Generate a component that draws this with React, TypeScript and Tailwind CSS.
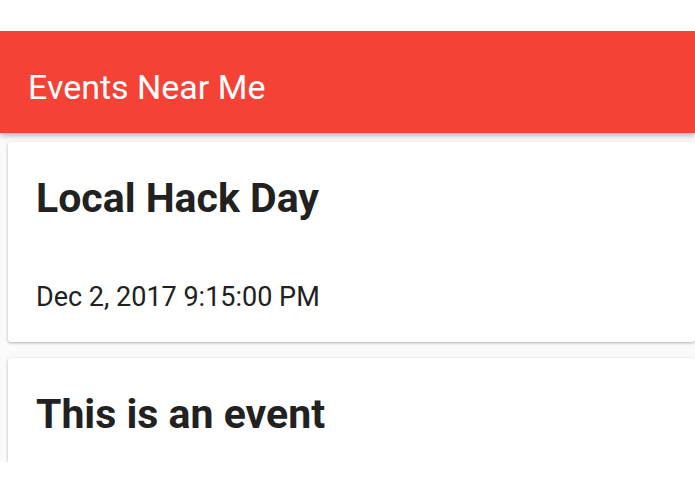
export default function App() {
  return (
    <div className="w-[695px] h-[494px] bg-white overflow-hidden" style={{ fontFamily: "Roboto, 'Liberation Sans', sans-serif" }}>
      <div className="h-[31px] bg-white" />

      <div className="h-[102px] bg-[#f44336] flex items-center pl-[28px] shadow-[0_3px_5px_rgba(0,0,0,0.25)] relative z-10">
        <h1 className="text-white text-[34px] leading-none mt-[10px]">Events Near Me</h1>
      </div>

      <div className="h-[329px] bg-[#fafafa] overflow-hidden pl-[8px] pt-[9px] flex flex-col gap-[16px]">
        <div className="shrink-0 bg-white rounded-[3px] shadow-[0_1px_3px_rgba(0,0,0,0.3)] h-[200px] pl-[28px] pt-[36px]">
          <h2 className="text-[#212121] text-[41px] font-bold leading-none">Local Hack Day</h2>
          <p className="text-[#212121] text-[27px] leading-none mt-[65px]">Dec 2, 2017 9:15:00 PM</p>
        </div>

        <div className="shrink-0 bg-white rounded-[3px] shadow-[0_1px_3px_rgba(0,0,0,0.3)] h-[200px] pl-[28px] pt-[36px]">
          <h2 className="text-[#212121] text-[41px] font-bold leading-none">This is an event</h2>
        </div>
      </div>
    </div>
  );
}
